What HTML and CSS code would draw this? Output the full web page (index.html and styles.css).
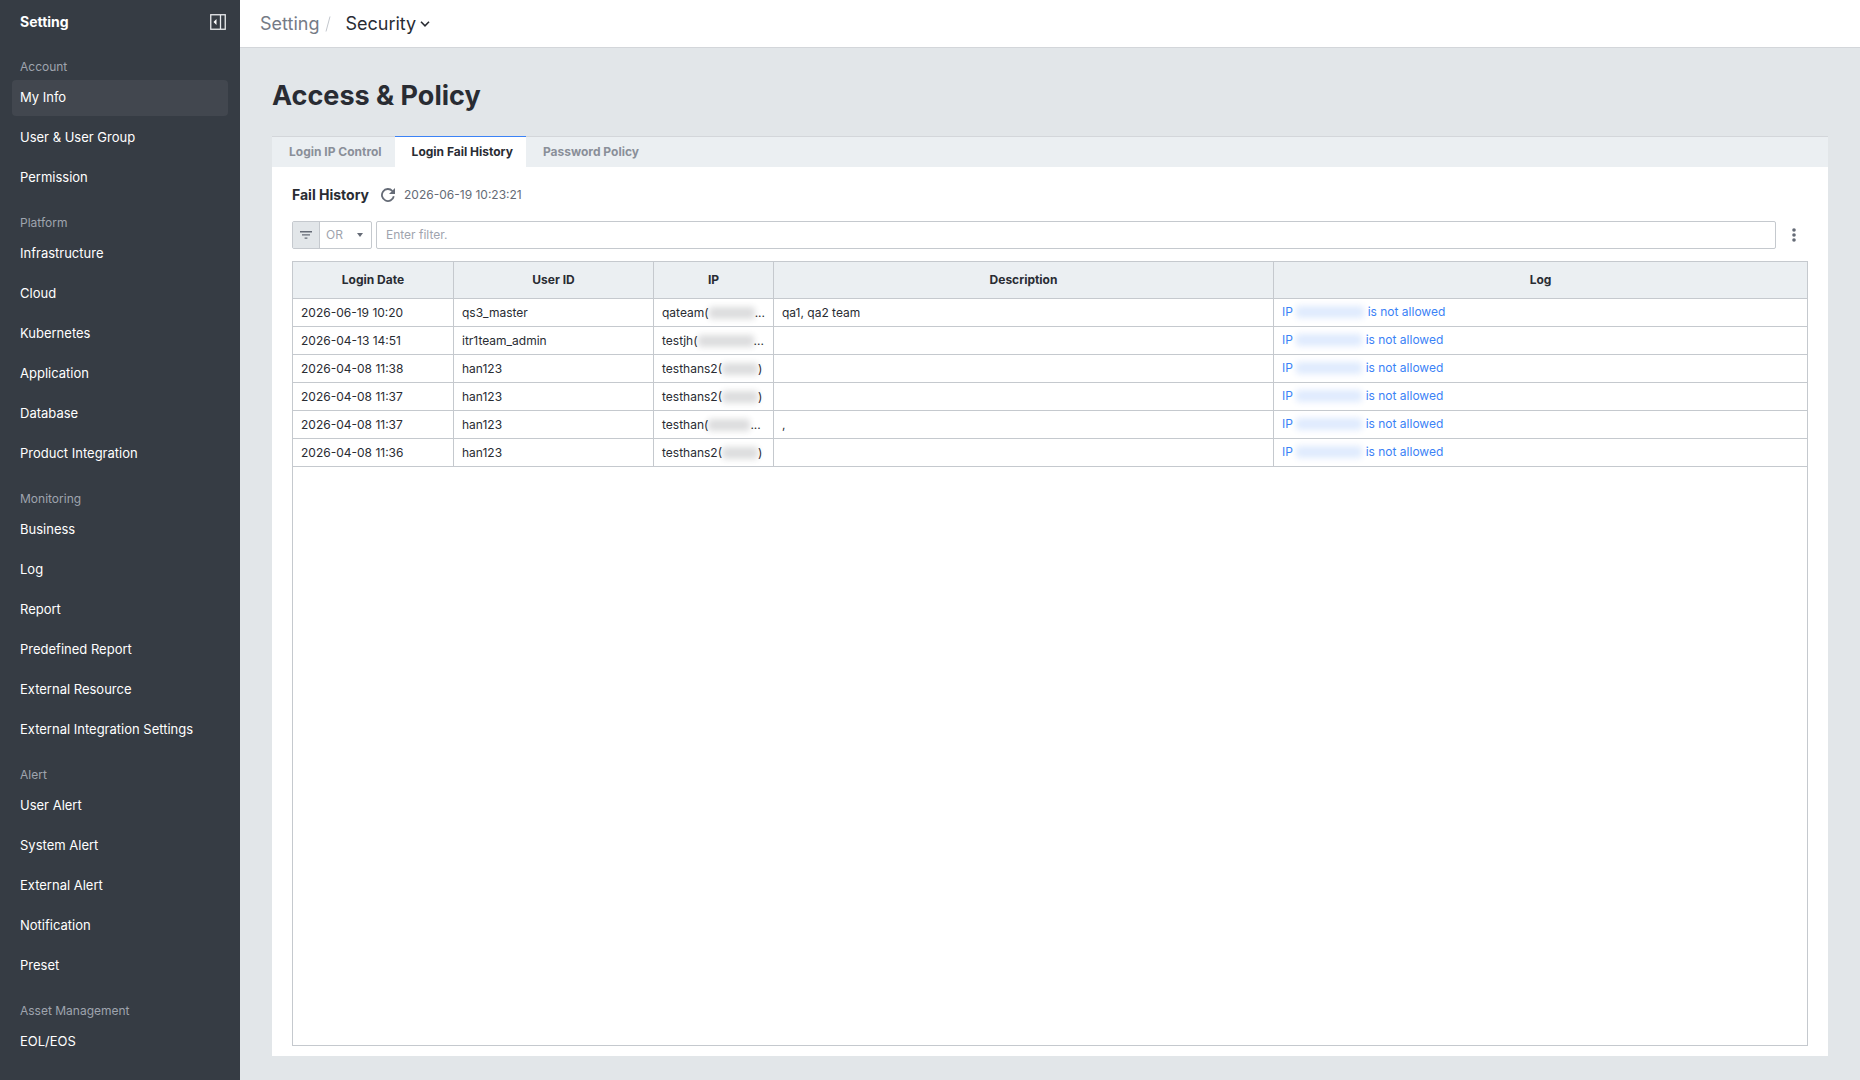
FILE: index.html
```html
<!DOCTYPE html>
<html lang="en">
<head>
<meta charset="utf-8">
<title>Access &amp; Policy</title>
<link rel="stylesheet" href="styles.css">
</head>
<body>
<div class="app">
  <aside class="sidebar">
    <div class="sidebar-head">
      <span class="sidebar-title">Setting</span>
      <button class="icon-button" type="button" aria-label="Collapse menu">
        <svg width="16" height="16" viewBox="0 0 16 16" fill="none" stroke="#e9ebee"><rect x="0.75" y="0.75" width="14.5" height="14.5" stroke-width="1.3"/><path d="M10.5 1v14" stroke-width="1.3"/><path d="M6.5 5v6L3.5 8z" fill="#fff" stroke="none"/></svg>
      </button>
    </div>
    <nav>
      <h2 class="group-label">Account</h2>
      <ul class="menu">
        <li><a class="menu-item is-active" href="#">My Info</a></li>
        <li><a class="menu-item" href="#">User &amp; User Group</a></li>
        <li><a class="menu-item" href="#">Permission</a></li>
      </ul>
      <h2 class="group-label">Platform</h2>
      <ul class="menu">
        <li><a class="menu-item" href="#">Infrastructure</a></li>
        <li><a class="menu-item" href="#">Cloud</a></li>
        <li><a class="menu-item" href="#">Kubernetes</a></li>
        <li><a class="menu-item" href="#">Application</a></li>
        <li><a class="menu-item" href="#">Database</a></li>
        <li><a class="menu-item" href="#">Product Integration</a></li>
      </ul>
      <h2 class="group-label">Monitoring</h2>
      <ul class="menu">
        <li><a class="menu-item" href="#">Business</a></li>
        <li><a class="menu-item" href="#">Log</a></li>
        <li><a class="menu-item" href="#">Report</a></li>
        <li><a class="menu-item" href="#">Predefined Report</a></li>
        <li><a class="menu-item" href="#">External Resource</a></li>
        <li><a class="menu-item" href="#">External Integration Settings</a></li>
      </ul>
      <h2 class="group-label">Alert</h2>
      <ul class="menu">
        <li><a class="menu-item" href="#">User Alert</a></li>
        <li><a class="menu-item" href="#">System Alert</a></li>
        <li><a class="menu-item" href="#">External Alert</a></li>
        <li><a class="menu-item" href="#">Notification</a></li>
        <li><a class="menu-item" href="#">Preset</a></li>
      </ul>
      <h2 class="group-label">Asset Management</h2>
      <ul class="menu">
        <li><a class="menu-item" href="#">EOL/EOS</a></li>
      </ul>
    </nav>
  </aside>

  <div class="content">
    <header class="topbar">
      <a class="crumb" href="#">Setting</a>
      <svg class="crumb-slash" width="6" height="16" viewBox="0 0 6 16" fill="none" stroke="#c3c7cd" aria-hidden="true"><path d="M5 0.5L1 15.5"/></svg>
      <button class="crumb-current" type="button">Security
        <svg width="10" height="6" viewBox="0 0 10 6" fill="none" stroke="#292c33" stroke-width="1.6"><path d="M1 0.8l4 4 4-4"/></svg>
      </button>
    </header>

    <main class="page">
      <h1 class="page-title">Access &amp; Policy</h1>
      <section class="card">
        <div class="tabs" role="tablist">
          <button class="tab" type="button" role="tab">Login IP Control</button>
          <button class="tab is-selected" type="button" role="tab" aria-selected="true">Login Fail History</button>
          <button class="tab" type="button" role="tab">Password Policy</button>
        </div>
        <div class="panel">
          <div class="panel-head">
            <h2 class="panel-title">Fail History</h2>
            <button class="icon-button" type="button" aria-label="Refresh">
              <svg width="14" height="14" viewBox="0 0 14 14" fill="none" stroke="#656b76"><path d="M12.8 8.3A6 6 0 1 1 11.4 3" stroke-width="1.8"/><path d="M14 0v6H8z" fill="#656b76" stroke="none"/></svg>
            </button>
            <time class="stamp">2026-06-19 10:23:21</time>
          </div>
          <div class="filter">
            <div class="operator">
              <span class="operator-icon"><svg width="12" height="8" viewBox="0 0 12 8" fill="#656b76"><path d="M0 0h12v1.4H0zM2 3.2h8v1.4H2zM4.6 6.4h2.8v1.4H4.6z"/></svg></span>
              <select class="operator-select" aria-label="Operator"><option>OR</option><option>AND</option></select>
              <svg class="operator-caret" width="6" height="4" viewBox="0 0 6 4" fill="#656b76" aria-hidden="true"><path d="M0 0h6L3 4z"/></svg>
            </div>
            <input class="filter-input" type="text" placeholder="Enter filter." aria-label="Filter">
            <button class="icon-button more" type="button" aria-label="More">
              <svg width="4" height="14" viewBox="0 0 4 14" fill="#656b76"><circle cx="2" cy="2" r="1.8"/><circle cx="2" cy="7" r="1.8"/><circle cx="2" cy="12" r="1.8"/></svg>
            </button>
          </div>
          <div class="grid">
            <table class="history">
              <colgroup><col class="col-date"><col class="col-user"><col class="col-ip"><col class="col-desc"><col></colgroup>
              <thead><tr><th>Login Date</th><th>User ID</th><th>IP</th><th>Description</th><th>Log</th></tr></thead>
              <tbody>
                <tr><td>2026-06-19 10:20</td><td>qs3_master</td><td>qateam(<span class="mask mask-m"></span>...</td><td>qa1, qa2 team</td><td><a class="log" href="#">IP <span class="mask mask-xl"></span> is not allowed</a></td></tr>
                <tr><td>2026-04-13 14:51</td><td>itr1team_admin</td><td>testjh(<span class="mask mask-l"></span>...</td><td></td><td><a class="log" href="#">IP <span class="mask mask-link"></span> is not allowed</a></td></tr>
                <tr><td>2026-04-08 11:38</td><td>han123</td><td>testhans2(<span class="mask mask-s"></span>)</td><td></td><td><a class="log" href="#">IP <span class="mask mask-link"></span> is not allowed</a></td></tr>
                <tr><td>2026-04-08 11:37</td><td>han123</td><td>testhans2(<span class="mask mask-s"></span>)</td><td></td><td><a class="log" href="#">IP <span class="mask mask-link"></span> is not allowed</a></td></tr>
                <tr><td>2026-04-08 11:37</td><td>han123</td><td>testhan(<span class="mask mask-n"></span>...</td><td>,</td><td><a class="log" href="#">IP <span class="mask mask-link"></span> is not allowed</a></td></tr>
                <tr><td>2026-04-08 11:36</td><td>han123</td><td>testhans2(<span class="mask mask-s"></span>)</td><td></td><td><a class="log" href="#">IP <span class="mask mask-link"></span> is not allowed</a></td></tr>
              </tbody>
            </table>
          </div>
        </div>
      </section>
    </main>
  </div>
</div>
</body>
</html>
```
FILE: styles.css
```css
*, *::before, *::after { box-sizing: border-box; }

body {
  margin: 0;
  font-family: Inter, "Liberation Sans", sans-serif;
  font-size: 12px;
  line-height: 18px;
  color: #292c33;
  background: #e2e6e9;
}

h1, h2, ul { margin: 0; padding: 0; }
ul { list-style: none; }
a { text-decoration: none; }
svg { display: block; flex: none; }

button, input, select { font: inherit; color: inherit; }
button { padding: 0; border: 0; background: none; cursor: pointer; }

.app { display: flex; min-height: 100vh; }

/* Sidebar */
.sidebar {
  flex: none;
  width: 240px;
  background: #363c44;
}
.sidebar-head {
  display: flex;
  align-items: center;
  justify-content: space-between;
  height: 44px;
  padding: 0 14px 0 20px;
}
.sidebar-title { font-size: 14px; font-weight: 700; color: #fff; }
.group-label {
  padding: 14px 20px 4px;
  font-size: 12px;
  font-weight: 400;
  color: #9fa4ae;
}
.menu { padding: 0 12px; }
.menu-item {
  display: block;
  height: 36px;
  margin-bottom: 4px;
  padding: 0 8px;
  border-radius: 4px;
  font-size: 13px;
  line-height: 34px;
  color: #fff;
}
.menu-item.is-active { background: #42474f; }

/* Top bar */
.content { display: flex; flex-direction: column; flex: 1; min-width: 0; }
.topbar {
  display: flex;
  align-items: center;
  height: 48px;
  padding: 0 20px;
  border-bottom: 1px solid #d3d6da;
  background: #fff;
  font-size: 18px;
  line-height: 24px;
}
.crumb { color: #757b86; }
.crumb-slash { margin: 0 14px 0 6px; }
.crumb-current { display: flex; align-items: center; gap: 4px; }

/* Page */
.page { display: flex; flex-direction: column; flex: 1; padding: 24px 32px; }
.page-title { padding-top: 4px; margin-bottom: 20px; font-size: 27px; font-weight: 700; line-height: 40px; }
.card { display: flex; flex-direction: column; flex: 1; background: #fff; }

.tabs { display: flex; height: 31px; background: #ebeff2; }
.tab {
  padding: 0 13px 0 17px;
  border-top: 1px solid #d3d6da;
  font-weight: 700;
  color: #8a8f99;
}
.tabs::after { content: ""; flex: 1; border-top: 1px solid #d3d6da; }
.tab.is-selected { border-top-color: #3b82f6; background: #fff; color: #292c33; }

.panel { display: flex; flex-direction: column; flex: 1; padding: 18px 20px 10px; }
.panel-head { display: flex; align-items: center; height: 20px; margin-bottom: 16px; }
.panel-title { margin-right: 12px; font-size: 14px; font-weight: 700; }
.stamp { margin-left: 9px; color: #656b76; }

.filter { display: flex; align-items: center; gap: 4px; margin-bottom: 12px; }
.operator {
  display: flex;
  align-items: center;
  width: 80px;
  height: 28px;
  border: 1px solid #c5c9ce;
  border-radius: 2px;
}
.operator-icon {
  display: grid;
  place-items: center;
  width: 27px;
  height: 26px;
  border-right: 1px solid #c5c9ce;
  background: #e2e6e9;
}
.operator-select {
  flex: 1;
  min-width: 0;
  height: 26px;
  margin-right: -16px;
  padding: 0 16px 0 6px;
  border: 0;
  background: none;
  color: #9fa4ae;
  appearance: none;
}
.operator-caret { margin: 0 8px 0 auto; pointer-events: none; }
.filter-input {
  flex: 1;
  min-width: 0;
  height: 28px;
  padding: 0 9px 1px;
  border: 1px solid #c5c9ce;
  border-radius: 2px;
  background: #fff;
}
.filter-input::placeholder { color: #9fa4ae; opacity: 1; }
.icon-button { display: grid; place-items: center; }
.icon-button.more { width: 28px; height: 28px; }

/* History table */
.grid { flex: 1; border: 1px solid #c5c9ce; }
.history { width: 100%; border-collapse: separate; border-spacing: 0; table-layout: fixed; }
.col-date { width: 161px; }
.col-user { width: 200px; }
.col-ip { width: 120px; }
.col-desc { width: 500px; }
.history th, .history td {
  border-right: 1px solid #c5c9ce;
  border-bottom: 1px solid #c5c9ce;
  white-space: nowrap;
}
.history th:last-child, .history td:last-child { border-right: 0; }
.history th { height: 37px; padding: 0; background: #ebeff2; font-weight: 700; }
.history td { height: 28px; padding: 0 8px; }
.log { display: block; margin-bottom: 2px; color: #3b82f6; }

/* Redacted address */
.mask {
  display: inline-block;
  height: 12px;
  border-radius: 3px;
  background: #292c33;
  opacity: 0.16;
  filter: blur(3px);
  vertical-align: middle;
}
.mask-s { width: 36px; }
.mask-n { width: 42px; }
.mask-m { width: 46px; }
.mask-l { width: 56px; }
.log .mask { background: #3b82f6; }
.mask-link { width: 66px; }
.mask-xl { width: 68px; }
```
